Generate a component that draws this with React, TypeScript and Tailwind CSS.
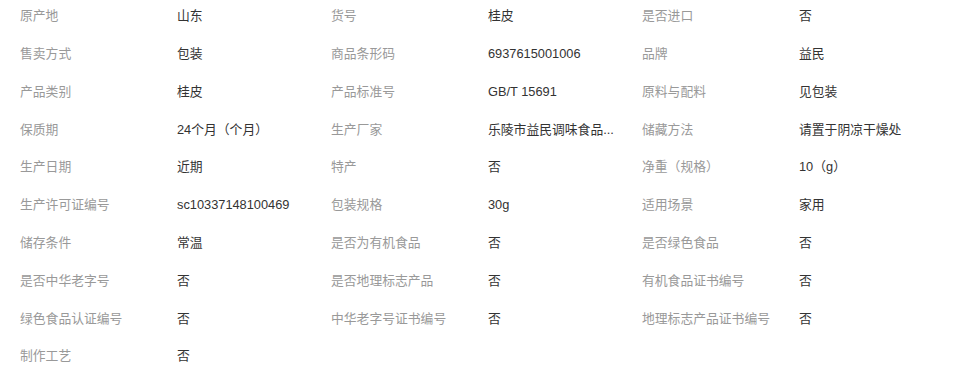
const rows: [string, string][][] = [
  [["原产地", "山东"], ["货号", "桂皮"], ["是否进口", "否"]],
  [["售卖方式", "包装"], ["商品条形码", "6937615001006"], ["品牌", "益民"]],
  [["产品类别", "桂皮"], ["产品标准号", "GB/T 15691"], ["原料与配料", "见包装"]],
  [["保质期", "24个月（个月）"], ["生产厂家", "乐陵市益民调味食品..."], ["储藏方法", "请置于阴凉干燥处"]],
  [["生产日期", "近期"], ["特产", "否"], ["净重（规格）", "10（g）"]],
  [["生产许可证编号", "sc10337148100469"], ["包装规格", "30g"], ["适用场景", "家用"]],
  [["储存条件", "常温"], ["是否为有机食品", "否"], ["是否绿色食品", "否"]],
  [["是否中华老字号", "否"], ["是否地理标志产品", "否"], ["有机食品证书编号", "否"]],
  [["绿色食品认证编号", "否"], ["中华老字号证书编号", "否"], ["地理标志产品证书编号", "否"]],
  [["制作工艺", "否"]],
];

export default function App() {
  return (
    <div
      className="w-[961px] h-[369px] overflow-hidden bg-white pl-[20px] pt-[1px] text-[12.8px]"
      style={{ fontFamily: '"Liberation Sans", "Noto Sans CJK SC", sans-serif' }}
    >
      <div className="flex flex-col gap-y-[7.78px]">
        {rows.map((row, i) => (
          <div key={i} className="flex h-[30px] items-center">
            {row.map(([label, value]) => (
              <div key={label} className="flex w-[311px] shrink-0 items-center">
                <span className="w-[157px] shrink-0 whitespace-nowrap text-[#999]">{label}</span>
                <span className="whitespace-nowrap text-[#333]">{value}</span>
              </div>
            ))}
          </div>
        ))}
      </div>
    </div>
  );
}
